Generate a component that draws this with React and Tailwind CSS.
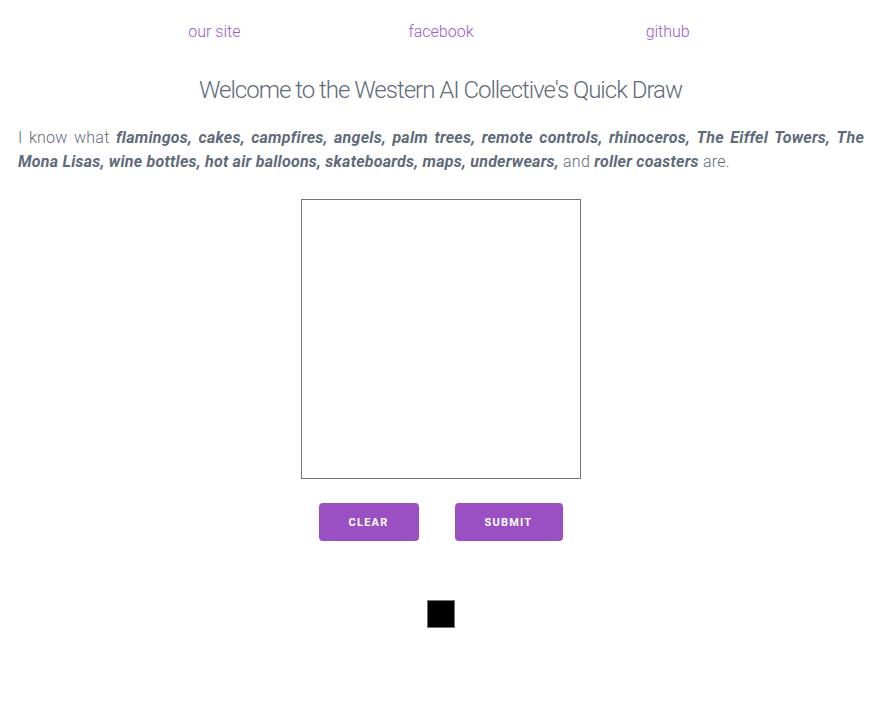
import React from 'react';

const items = [
  'flamingos', 'cakes', 'campfires', 'angels', 'palm trees', 'remote controls', 'rhinoceros',
  'The Eiffel Towers', 'The Mona Lisas', 'wine bottles', 'hot air balloons', 'skateboards',
  'maps', 'underwears',
];

export default function App() {
  return (
    <div className="min-h-screen bg-white text-[#5f6b7a] font-light" style={{ fontFamily: 'Roboto, sans-serif' }}>
      <nav className="ml-[101px] w-[680px] grid grid-cols-3 pt-[20px] text-center text-[16px] leading-[24px]">
        <a href="#" className="text-[#9b59d0]">our site</a>
        <a href="#" className="text-[#9b59d0]">facebook</a>
        <a href="#" className="text-[#9b59d0]">github</a>
      </nav>

      <h1 className="mt-[30px] pl-[4px] text-center text-[24px] leading-[32px] tracking-[-1px] text-[#5f6b7a]">
        Welcome to the Western AI Collective's Quick Draw
      </h1>

      <p className="mt-[20px] pl-[18px] pr-[13px] text-justify text-[16px] leading-[24px] tracking-[0.25px]">
        I know what{' '}
        {items.map((it) => (
          <React.Fragment key={it}>
            <b className="font-bold italic">{it},</b>{' '}
          </React.Fragment>
        ))}
        and <b className="font-bold italic">roller coasters</b> are.
      </p>

      <div className="mt-[25px] pl-[4px] flex justify-center">
        <div className="w-[280px] h-[280px] border border-[#757575] bg-white" />
      </div>

      <div className="mt-[24px] pl-[4px] flex justify-center gap-[36px]">
        <button className="w-[100px] h-[38px] pt-[2px] rounded-[4px] bg-[#9a50c3] text-white text-[11px] font-bold tracking-[1.2px]">
          CLEAR
        </button>
        <button className="w-[108px] h-[38px] pt-[2px] rounded-[4px] bg-[#9a50c3] text-white text-[11px] font-bold tracking-[1.2px]">
          SUBMIT
        </button>
      </div>

      <div className="mt-[59px] pl-[4px] flex justify-center">
        <div className="w-[28px] h-[28px] bg-black border border-[#757575]" />
      </div>
    </div>
  );
}
